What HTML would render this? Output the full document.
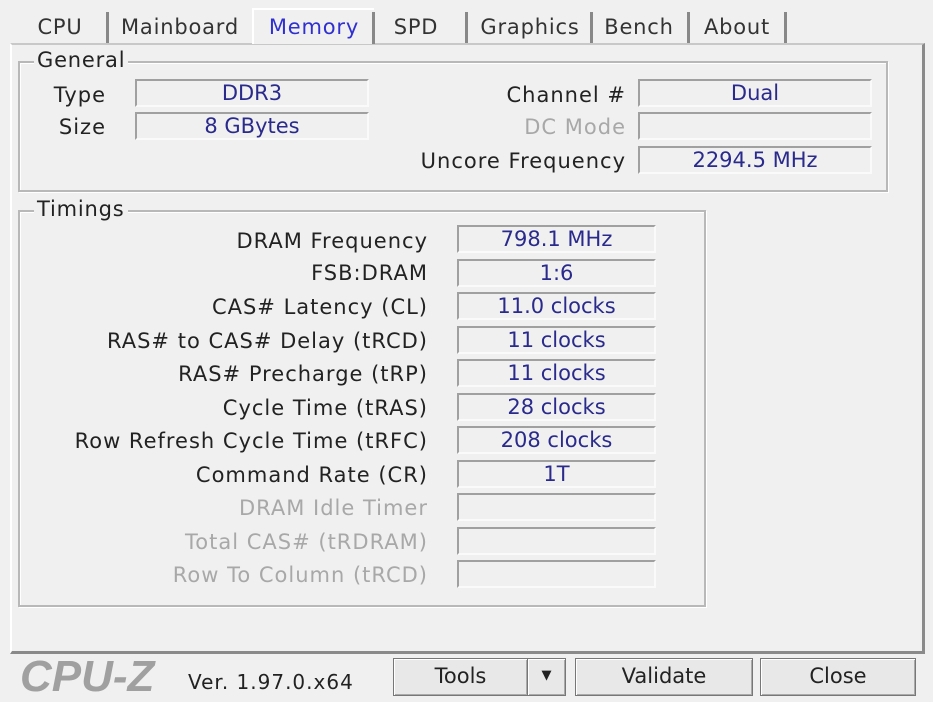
<!DOCTYPE html>
<html><head><meta charset="utf-8"><style>
*{margin:0;padding:0;box-sizing:border-box}
body{width:933px;height:700px;background:#f0f0f0;font-family:"DejaVu Sans","Liberation Sans",sans-serif;font-size:21px;color:#222;position:relative;overflow:hidden}
.a{position:absolute;white-space:nowrap}
.tab{position:absolute;top:12px;height:31px;line-height:30px;text-align:center;color:#333;letter-spacing:0.8px;white-space:nowrap}
.sep{position:absolute;top:12px;width:3px;height:32px;background:#888}
.panel{position:absolute;left:10px;top:43px;width:915px;height:611px;border-top:2px solid #c8c8c8;border-left:2px solid #fff;border-right:3px solid #8a8a8a;border-bottom:3px solid #8a8a8a}
.grp{position:absolute;border:2px solid #b8b8b8;box-shadow:inset 1px 1px 0 #fff,1px 1px 0 #fff}
.leg{position:absolute;background:#f0f0f0;padding:0 3px;color:#222;line-height:20px;letter-spacing:0.8px}
.f{position:absolute;height:28px;border-top:2px solid #a0a0a0;border-left:2px solid #a0a0a0;border-right:2px solid #fafafa;border-bottom:2px solid #fafafa;color:#2a2a8c;text-align:center;line-height:24px;white-space:nowrap}
.l{position:absolute;text-align:right;line-height:28px;letter-spacing:1px;white-space:nowrap}
.g{color:#a8a8a8}
.btn{position:absolute;top:658px;height:38px;border:1px solid #777;background:#e8e8e8;box-shadow:inset 1px 1px 0 #fff,inset -1px -1px 0 #aaa;text-align:center;line-height:34px;color:#222}
</style></head><body>
<div class="tab" style="left:28px;width:64px">CPU</div>
<div class="sep" style="left:106px"></div>
<div class="tab" style="left:114px;width:132px">Mainboard</div>
<div class="tab" style="left:252px;width:122px;top:8px;height:36px;background:#f0f0f0;color:#3030d0;border-top:2px solid #fff;border-left:2px solid #fff;z-index:2;line-height:34px">Memory</div>
<div class="sep" style="left:372px;z-index:3"></div>
<div class="tab" style="left:380px;width:72px">SPD</div>
<div class="sep" style="left:465px"></div>
<div class="tab" style="left:470px;width:120px">Graphics</div>
<div class="sep" style="left:590px"></div>
<div class="tab" style="left:594px;width:90px">Bench</div>
<div class="sep" style="left:687px"></div>
<div class="tab" style="left:692px;width:90px">About</div>
<div class="sep" style="left:784px"></div>
<div class="panel"></div>

<div class="grp" style="left:18px;top:61px;width:870px;height:131px"></div>
<div class="leg" style="left:34px;top:50px">General</div>
<div class="l" style="left:30px;top:81px;width:76px">Type</div>
<div class="f" style="left:135px;top:79px;width:234px">DDR3</div>
<div class="l" style="left:30px;top:113px;width:76px">Size</div>
<div class="f" style="left:135px;top:112px;width:234px">8 GBytes</div>
<div class="l" style="left:380px;top:81px;width:246px">Channel #</div>
<div class="f" style="left:638px;top:79px;width:234px">Dual</div>
<div class="l g" style="left:380px;top:113px;width:246px">DC Mode</div>
<div class="f" style="left:638px;top:112px;width:234px"></div>
<div class="l" style="left:380px;top:147px;width:246px">Uncore Frequency</div>
<div class="f" style="left:638px;top:146px;width:234px">2294.5 MHz</div>

<div class="grp" style="left:18px;top:210px;width:688px;height:397px"></div>
<div class="leg" style="left:34px;top:199px">Timings</div>

<div class="l" style="left:20px;top:227px;width:408px">DRAM Frequency</div><div class="f" style="left:457px;top:225px;width:199px">798.1 MHz</div>
<div class="l" style="left:20px;top:259px;width:408px">FSB:DRAM</div><div class="f" style="left:457px;top:259px;width:199px">1:6</div>
<div class="l" style="left:20px;top:293px;width:408px">CAS# Latency (CL)</div><div class="f" style="left:457px;top:292px;width:199px">11.0 clocks</div>
<div class="l" style="left:20px;top:327px;width:408px">RAS# to CAS# Delay (tRCD)</div><div class="f" style="left:457px;top:326px;width:199px">11 clocks</div>
<div class="l" style="left:20px;top:360px;width:408px">RAS# Precharge (tRP)</div><div class="f" style="left:457px;top:359px;width:199px">11 clocks</div>
<div class="l" style="left:20px;top:394px;width:408px">Cycle Time (tRAS)</div><div class="f" style="left:457px;top:393px;width:199px">28 clocks</div>
<div class="l" style="left:20px;top:427px;width:408px">Row Refresh Cycle Time (tRFC)</div><div class="f" style="left:457px;top:426px;width:199px">208 clocks</div>
<div class="l" style="left:20px;top:461px;width:408px">Command Rate (CR)</div><div class="f" style="left:457px;top:460px;width:199px">1T</div>
<div class="l g" style="left:20px;top:494px;width:408px">DRAM Idle Timer</div><div class="f" style="left:457px;top:493px;width:199px"></div>
<div class="l g" style="left:20px;top:528px;width:408px">Total CAS# (tRDRAM)</div><div class="f" style="left:457px;top:527px;width:199px"></div>
<div class="l g" style="left:20px;top:561px;width:408px">Row To Column (tRCD)</div><div class="f" style="left:457px;top:560px;width:199px"></div>

<div class="a" style="left:20px;top:652px;font:italic bold 44px 'Liberation Sans',sans-serif;color:#a0a0a0">CPU-Z</div>
<div class="a" style="left:188px;top:670px;font-size:20px;letter-spacing:1px;color:#222">Ver. 1.97.0.x64</div>
<div class="btn" style="left:393px;width:135px">Tools</div>
<div class="btn" style="left:527px;width:39px;font-size:13px">&#9660;</div>
<div class="btn" style="left:575px;width:178px">Validate</div>
<div class="btn" style="left:760px;width:156px">Close</div>
</body></html>
